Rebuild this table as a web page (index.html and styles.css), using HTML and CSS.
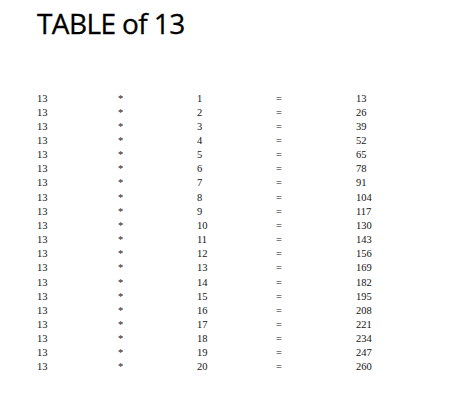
FILE: index.html
```html
<!DOCTYPE html>
<html>
<head>
<meta charset="utf-8">
<link rel="stylesheet" href="styles.css">
</head>
<body>
<div class="page">
  <h1 class="title">TABLE of 13</h1>
  <div class="table" id="table">
    <div class="row"><span>13</span><span>*</span><span>1</span><span>=</span><span>13</span></div>
    <div class="row"><span>13</span><span>*</span><span>2</span><span>=</span><span>26</span></div>
    <div class="row"><span>13</span><span>*</span><span>3</span><span>=</span><span>39</span></div>
    <div class="row"><span>13</span><span>*</span><span>4</span><span>=</span><span>52</span></div>
    <div class="row"><span>13</span><span>*</span><span>5</span><span>=</span><span>65</span></div>
    <div class="row"><span>13</span><span>*</span><span>6</span><span>=</span><span>78</span></div>
    <div class="row"><span>13</span><span>*</span><span>7</span><span>=</span><span>91</span></div>
    <div class="row"><span>13</span><span>*</span><span>8</span><span>=</span><span>104</span></div>
    <div class="row"><span>13</span><span>*</span><span>9</span><span>=</span><span>117</span></div>
    <div class="row"><span>13</span><span>*</span><span>10</span><span>=</span><span>130</span></div>
    <div class="row"><span>13</span><span>*</span><span>11</span><span>=</span><span>143</span></div>
    <div class="row"><span>13</span><span>*</span><span>12</span><span>=</span><span>156</span></div>
    <div class="row"><span>13</span><span>*</span><span>13</span><span>=</span><span>169</span></div>
    <div class="row"><span>13</span><span>*</span><span>14</span><span>=</span><span>182</span></div>
    <div class="row"><span>13</span><span>*</span><span>15</span><span>=</span><span>195</span></div>
    <div class="row"><span>13</span><span>*</span><span>16</span><span>=</span><span>208</span></div>
    <div class="row"><span>13</span><span>*</span><span>17</span><span>=</span><span>221</span></div>
    <div class="row"><span>13</span><span>*</span><span>18</span><span>=</span><span>234</span></div>
    <div class="row"><span>13</span><span>*</span><span>19</span><span>=</span><span>247</span></div>
    <div class="row"><span>13</span><span>*</span><span>20</span><span>=</span><span>260</span></div>
  </div>
</div>
</body>
</html>
```

FILE: styles.css
```css
html, body {
  margin: 0;
  padding: 0;
  background: #ffffff;
}
.page {
  padding: 4px 0 0 37px;
}
.title {
  margin: 0;
  font-family: "Open Sans", sans-serif;
  font-weight: 400;
  font-size: 28px;
  line-height: 38px;
  color: #000000;
  letter-spacing: -0.6px;
  -webkit-text-stroke: 0.3px #000000;
}
.table {
  margin-top: 49.5px;
  font-family: "Liberation Serif", serif;
  font-size: 10.5px;
  line-height: 14.15px;
  color: #141414;
}
.row {
  display: grid;
  grid-template-columns: 81px 79px 79px 80px auto;
}
```
